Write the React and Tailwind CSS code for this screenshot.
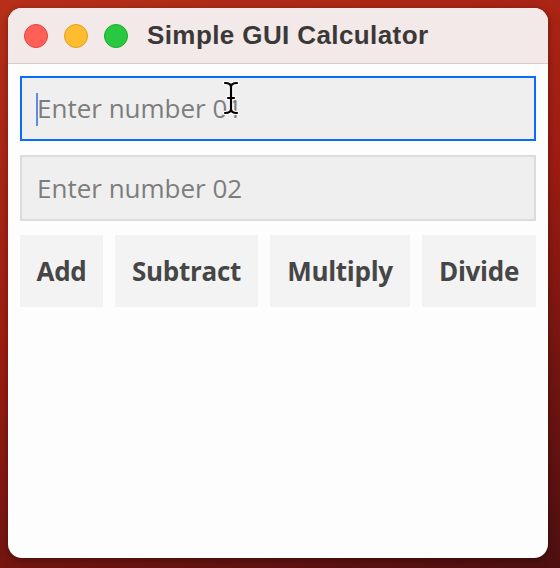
export default function App() {
  const buttons = [
    { label: "Add", w: "w-[83px]" },
    { label: "Subtract", w: "w-[143px]" },
    { label: "Multiply", w: "w-[140px]" },
    { label: "Divide", w: "w-[114px]" },
  ];

  return (
    <div className="w-[560px] h-[568px] bg-[linear-gradient(160deg,#b8301a_0%,#a01d12_45%,#6a1410_80%,#4e0f10_100%)] p-2 pb-[10px] pr-3">
      {/* window */}
      <div className="relative h-full bg-[#fdfdfd] rounded-[14px] overflow-hidden shadow-[0_2px_8px_rgba(0,0,0,0.35)] flex flex-col">
        {/* title bar */}
        <div className="h-14 shrink-0 bg-[#f3e9e8] border-b border-[#d4cfce] flex items-center pl-4 gap-4">
          <div className="flex items-center gap-4">
            <span className="w-6 h-6 rounded-full bg-[#fe5f57] border border-[#e0443e]"></span>
            <span className="w-6 h-6 rounded-full bg-[#febc2e] border border-[#dea123]"></span>
            <span className="w-6 h-6 rounded-full bg-[#28c840] border border-[#1aab29]"></span>
          </div>
          <span className="ml-[3px] text-[26px] font-bold text-[#3b3838] font-['Liberation_Sans',Arial,sans-serif] tracking-[0.4px]">
            Simple GUI Calculator
          </span>
        </div>

        {/* body */}
        <div className="flex flex-col px-3 pt-3 gap-[14px] font-['Open_Sans','Noto_Sans',sans-serif]">
          <div className="relative h-[65px] bg-[#efefef] border-2 border-[#0a6cff] flex items-center pl-[15px]">
            <span className="absolute left-[14px] top-[15px] w-[2px] h-[33px] bg-[#5b8de0]"></span>
            <span className="text-[26px] text-[#7d7d7d]">Enter number 01</span>
            {/* I-beam cursor */}
            <svg className="absolute left-[200px] top-[3px]" width="18" height="34" viewBox="0 0 18 34">
              <path d="M3 2 Q9 2 9 6 L9 28 Q9 32 3 32 M15 2 Q9 2 9 6 M9 28 Q9 32 15 32 M6 17 L12 17" fill="none" stroke="#fff" strokeWidth="4.5" strokeLinecap="round" />
              <path d="M3 2 Q9 2 9 6 L9 28 Q9 32 3 32 M15 2 Q9 2 9 6 M9 28 Q9 32 15 32 M6 17 L12 17" fill="none" stroke="#000" strokeWidth="2.2" strokeLinecap="round" />
            </svg>
          </div>
          <div className="h-[66px] bg-[#efefef] border-2 border-[#dcdcdc] flex items-center pl-[15px]">
            <span className="text-[26px] text-[#7d7d7d]">Enter number 02</span>
          </div>
          <div className="flex gap-3">
            {buttons.map((b) => (
              <div
                key={b.label}
                className={`${b.w} h-[72px] bg-[#f3f3f3] flex items-center justify-center text-[26px] font-bold text-[#464646] tracking-[-0.3px]`}
              >
                {b.label}
              </div>
            ))}
          </div>
        </div>
      </div>
    </div>
  );
}
